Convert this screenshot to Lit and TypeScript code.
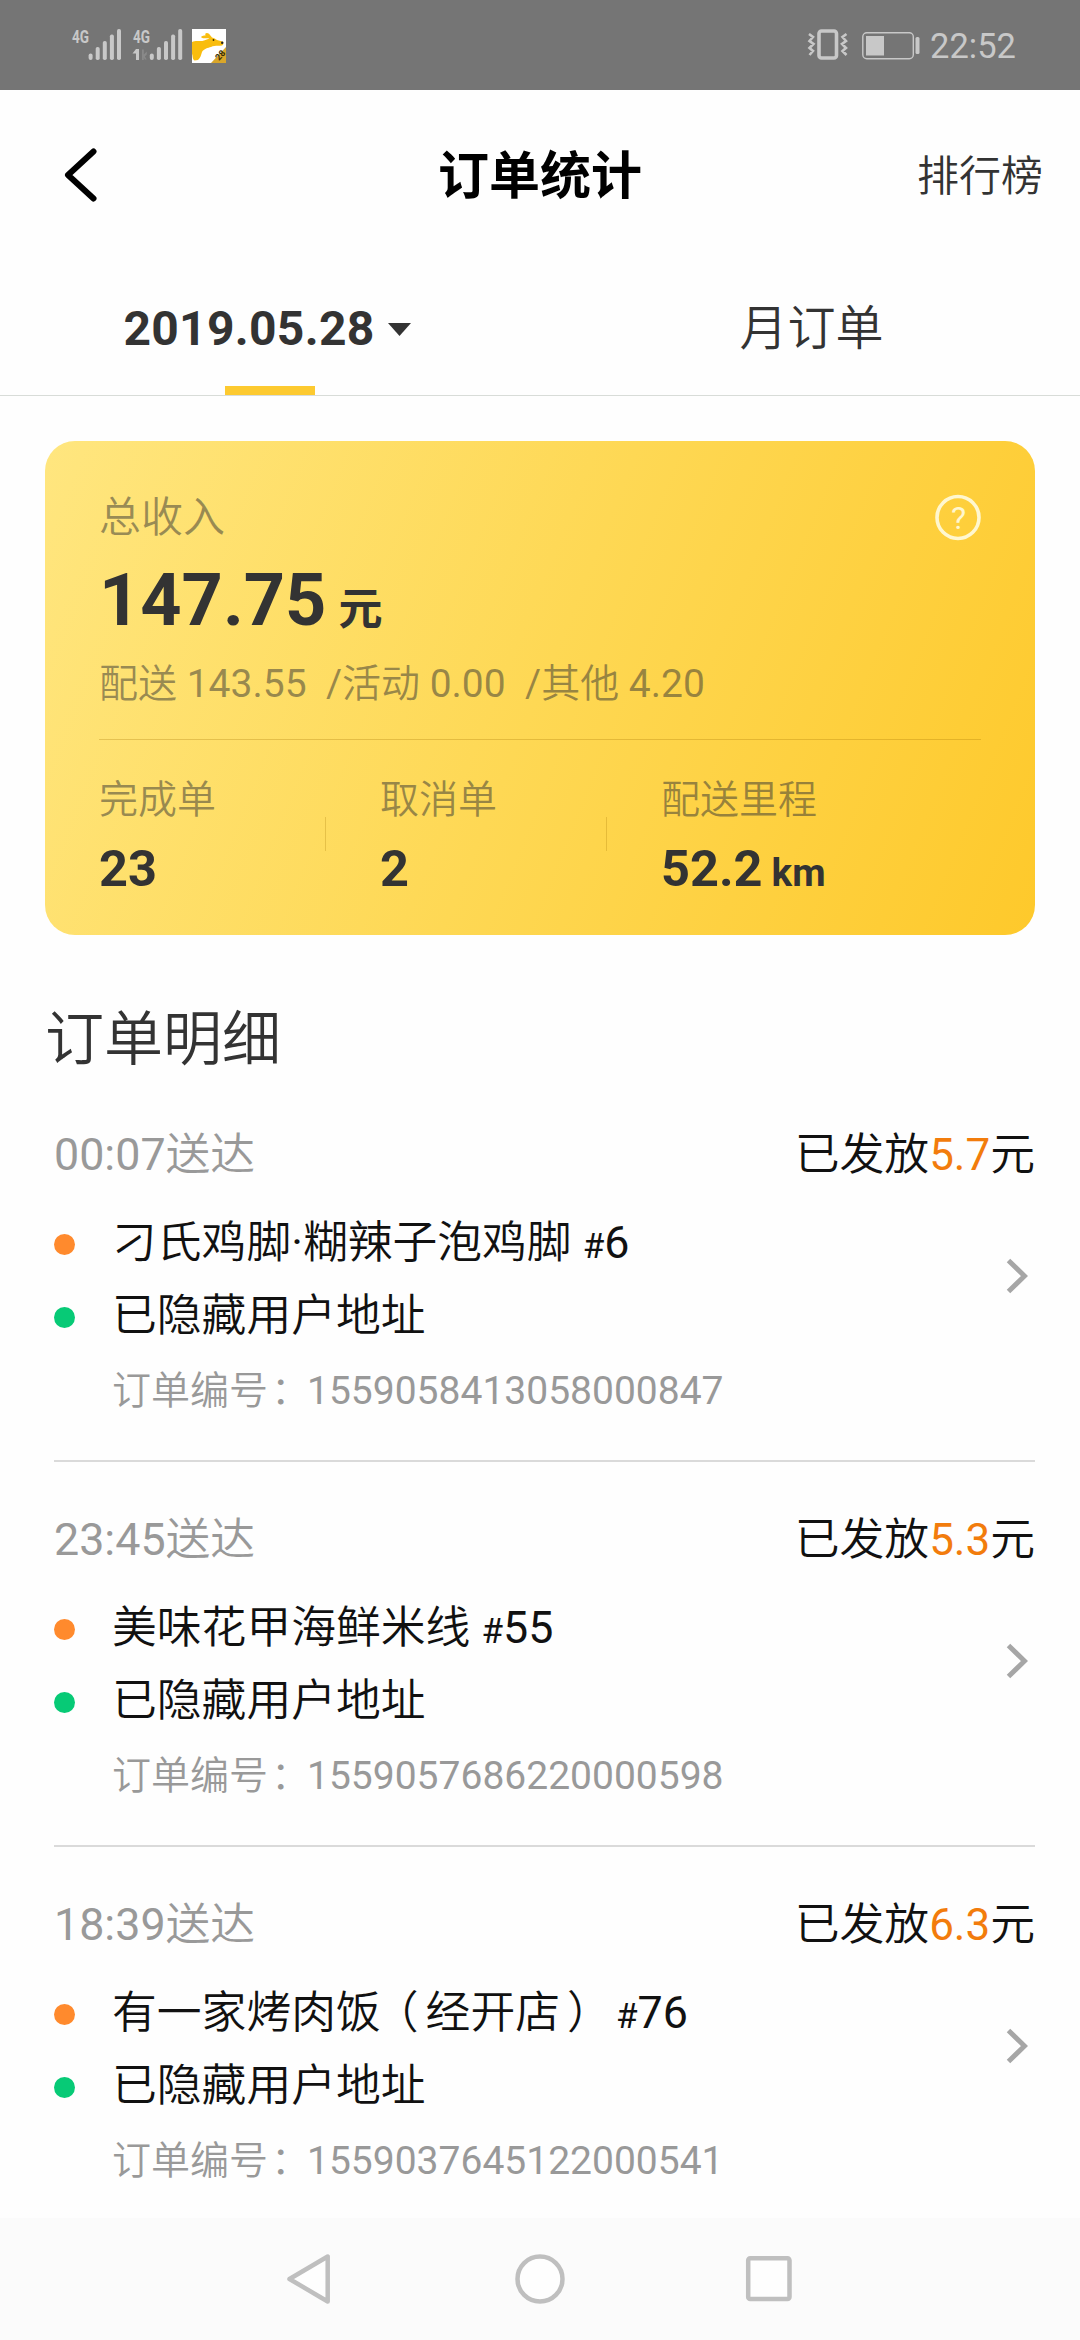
import { LitElement, html, svg, css } from "lit";
import { customElement, property } from "lit/decorators.js";

interface Order {
  time: string;
  pay: string;
  shop: string;
  seq: string;
  id: string;
}

const ORDERS: Order[] = [
  { time: "00:07", pay: "5.7", shop: "刁氏鸡脚·糊辣子泡鸡脚", seq: "6", id: "1559058413058000847" },
  { time: "23:45", pay: "5.3", shop: "美味花甲海鲜米线", seq: "55", id: "1559057686220000598" },
  { time: "18:39", pay: "6.3", shop: "有一家烤肉饭（经开店）", seq: "76", id: "1559037645122000541" },
];

const signalBars = (x: number) => svg`
  <rect x=${x} y="24.5" width="4" height="6.5" rx="2" />
  <rect x=${x + 7.1} y="18" width="4" height="13" rx="1.8" />
  <rect x=${x + 14.2} y="12" width="4" height="19" rx="1.8" />
  <rect x=${x + 21.3} y="5.5" width="4" height="25.5" rx="1.8" />
  <rect x=${x + 28.4} y="0" width="4" height="31" rx="1.8" />`;

// Full-width brackets sit closer to the middle of their em box.
const spaced = (text: string) =>
  text
    .split(/([（）])/)
    .map((part) =>
      part === "（"
        ? html`<span class="open">（</span>`
        : part === "）"
          ? html`<span class="close">）</span>`
          : part
    );

@customElement("status-bar")
class StatusBar extends LitElement {
  static styles = css`
    :host {
      display: flex;
      align-items: center;
      height: 90px;
      padding: 0 65px 0 71px;
      background: #757575;
      box-sizing: border-box;
      flex: none;
    }
    svg { display: block; flex: none; overflow: visible; }
    .signal { fill: #c8c8c8; font: 700 19px Roboto, sans-serif; }
    .app { margin-left: 9px; margin-top: 2px; }
    .badge { font: 700 9px Roboto, sans-serif; fill: #3a3008; }
    .gap { flex: 1; }
    .battery { margin-left: 14px; margin-top: 1px; }
    .clock {
      margin-left: 10px;
      margin-top: 2px;
      font: 400 34.5px/40px Roboto, sans-serif;
      color: #c8c8c8;
      width: 85px;
      white-space: nowrap;
    }
  `;
  render() {
    return html`
      <svg class="signal" width="112" height="32" viewBox="0 0 112 32">
        <text x="1" y="14" textLength="17" lengthAdjust="spacingAndGlyphs">4G</text>
        ${signalBars(17.6)}
        <text x="62" y="14" textLength="17" lengthAdjust="spacingAndGlyphs">4G</text>
        <path d="M65 20h3v11h-3v-6.500h-3.500z" />
        <path d="M71 20.500h1.800v5l3-3v3l-2 2 2 3h-2l-1-2v2.500h-1.800z" opacity=".25" />
        ${signalBars(78.8)}
      </svg>
      <svg class="app" width="34" height="34" viewBox="0 0 34 34">
        <rect width="34" height="34" fill="#fff" />
        <path d="M0 13C4 11 9 13 12 11.500l5.500-2C15 9 10 10 9 8c1-1.500 3-1.500 4.500-1.500C12.500 4 15 3.500 17 4.800l3 3.700c2 .5 3.500 1.500 5 2.500l5.500 1.500c1.500 1 1 3.500-.5 4-4 .5-8-.5-11 1.500-3 1-7 1.500-9 5-1 3-1.500 6-4 8l-3.500.5C0 29.500 1 27 0 25z" fill="#f9bd0e" />
        <circle cx="21.500" cy="11" r=".9" fill="#3a3008" />
        <circle cx="30.200" cy="13.800" r="1.200" fill="#222" />
        <path d="M34 18v16H19z" fill="#d9a62a" />
        <text class="badge" transform="translate(27 32) rotate(-47)">28</text>
      </svg>
      <span class="gap"></span>
      <svg width="40" height="32" viewBox="0 0 40 32" fill="none" stroke="#c8c8c8">
        <rect x="11" y="2" width="17.500" height="27" rx="2.500" stroke-width="3.600" />
        <path d="M1 5l4 3-3.500 4 4 3-4 4 3.500 3-3.500 4M38.500 5l-4 3 3.500 4-4 3 4 4-3.500 3 4 4" stroke-width="2.600" />
      </svg>
      <svg class="battery" width="58" height="28" viewBox="0 0 58 28">
        <rect x=".8" y=".8" width="50.500" height="26" rx="4" fill="none" stroke="#c8c8c8" stroke-width="1.400" />
        <rect x="4" y="4" width="18" height="19.500" fill="#c8c8c8" />
        <rect x="53.500" y="5" width="4" height="17" rx="1.500" fill="#c8c8c8" />
      </svg>
      <span class="clock">22:52</span>
    `;
  }
}

@customElement("summary-card")
class SummaryCard extends LitElement {
  static styles = css`
    :host {
      display: block;
      box-sizing: border-box;
      flex: none;
      height: 494px;
      margin: 45px 45px 0;
      padding: 53px 54px 0 54px;
      border-radius: 30px;
      background: linear-gradient(112deg, #ffe67f 0%, #fed854 50%, #fec92b 100%);
      color: #333;
    }
    .head { display: flex; justify-content: space-between; height: 48px; }
    .label { font-size: 42px; line-height: 48px; color: rgba(51, 51, 51, 0.5); }
    .help { display: block; overflow: visible; }
    .mark { font: 400 32px Roboto, sans-serif; fill: #fff7cf; }
    .amount { margin-top: 17px; line-height: 84px; font-size: 72px; font-weight: 700; white-space: pre; }
    .unit { font-family: "Noto Sans CJK SC", sans-serif; font-size: 44px; line-height: 0; font-weight: 700; margin-left: 12px; }
    .parts { margin-top: 18px; font-size: 39px; line-height: 46px; color: rgba(51, 51, 51, 0.5); white-space: pre; }
    .rule { height: 1px; margin-top: 32px; background: rgba(160, 110, 0, 0.28); }
    .stats { display: grid; grid-template-columns: 281px 281px 1fr; margin-top: 37px; }
    .cell { display: flex; justify-content: space-between; align-items: center; }
    .name { font-size: 39px; line-height: 46px; color: rgba(51, 51, 51, 0.5); }
    .value { margin-top: 18px; font-size: 50.5px; line-height: 56px; font-weight: 700; white-space: nowrap; }
    .small { font-size: 38.5px; line-height: 0; margin-left: 9px; }
    .tick { width: 1px; height: 34px; margin-right: 54px; margin-bottom: 6px; background: rgba(160, 110, 0, 0.25); }
  `;
  private stat(name: string, value: string, unit = "", tick = true) {
    return html`<div class="cell">
      <div>
        <div class="name">${name}</div>
        <div class="value">${value}${unit ? html`<span class="small">${unit}</span>` : ""}</div>
      </div>
      ${tick ? html`<i class="tick"></i>` : ""}
    </div>`;
  }
  render() {
    return html`
      <div class="head">
        <span class="label">总收入</span>
        <svg class="help" width="46" height="46" viewBox="0 0 46 46">
          <circle cx="23" cy="23.500" r="21" fill="none" stroke="#fff7cf" stroke-width="3.600" />
          <text class="mark" x="23.500" y="35" text-anchor="middle">?</text>
        </svg>
      </div>
      <div class="amount">147.75<span class="unit">元</span></div>
      <div class="parts">配送 143.55  /活动 0.00  /其他 4.20</div>
      <div class="rule"></div>
      <div class="stats">
        ${this.stat("完成单", "23")} ${this.stat("取消单", "2")} ${this.stat("配送里程", "52.2", "km", false)}
      </div>
    `;
  }
}

@customElement("order-row")
class OrderRow extends LitElement {
  @property({ attribute: false }) order!: Order;
  static styles = css`
    :host {
      display: block;
      box-sizing: border-box;
      flex: none;
      height: 385px;
      padding-top: 51px;
      margin: 0 45px 0 54px;
      border-bottom: 2px solid #dadada;
      color: #111;
      font-size: 44.8px;
      line-height: 54px;
      white-space: nowrap;
    }
    .top { display: flex; justify-content: space-between; }
    .time { color: #999; }
    .pay { color: #f27c0c; font-size: 44px; line-height: 0; }
    .body { display: flex; align-items: flex-start; margin-top: 34px; }
    .lines { flex: 1; }
    .line { display: flex; align-items: center; height: 54px; margin-bottom: 19px; }
    .dot { width: 21px; height: 21px; border-radius: 50%; margin: 3px 37px 0 0; background: #ff8a2d; }
    .dot.green { background: #07ca76; }
    .hash { font-size: 35px; line-height: 0; }
    .open, .close { font-feature-settings: "halt"; }
    .open { margin: 0 7px 0 15.4px; }
    .close { margin: 0 15.4px 0 7px; }
    .id { margin: 25px 0 0 58px; font-size: 39px; line-height: 46px; color: #999; }
    .colon { margin: 0 -3px 0 3px; }
    .arrow { display: block; margin: 42px 7px 0 0; }
  `;
  render() {
    const o = this.order;
    return html`
      <div class="top">
        <span class="time">${o.time}送达</span>
        <span>已发放<span class="pay">${o.pay}</span>元</span>
      </div>
      <div class="body">
        <div class="lines">
          <div class="line"><i class="dot"></i><span>${spaced(o.shop)} <span class="hash">#</span>${o.seq}</span></div>
          <div class="line"><i class="dot green"></i><span>已隐藏用户地址</span></div>
          <div class="id">订单编号<span class="colon">：</span>${o.id}</div>
        </div>
        <svg class="arrow" width="22" height="36" viewBox="0 0 22 36">
          <path d="M2.500 2.500L18.500 18 2.500 33.500" fill="none" stroke="#a6a6a6" stroke-width="5" />
        </svg>
      </div>
    `;
  }
}

@customElement("app-root")
class AppRoot extends LitElement {
  static styles = css`
    :host {
      display: flex;
      flex-direction: column;
      width: 1080px;
      height: 2340px;
      overflow: hidden;
      background: #fefefe;
      font-family: Roboto, "Noto Sans CJK SC DemiLight", "Noto Sans CJK SC Light", "Noto Sans CJK SC", sans-serif;
      color: #333;
    }
    .bar {
      flex: none;
      display: grid;
      grid-template-columns: 1fr auto 1fr;
      align-items: center;
      height: 174px;
      padding: 0 37px 0 64px;
    }
    .title {
      margin-right: 27px;
      font-family: Roboto, "Noto Sans CJK SC", sans-serif;
      font-size: 51px;
      line-height: 60px;
      font-weight: 700;
      color: #000;
    }
    .rank { justify-self: end; font-size: 42px; line-height: 50px; }
    .back { display: block; margin-top: -5px; }
    .tabs { flex: none; display: grid; grid-template-columns: 1fr 1fr; height: 132px; box-sizing: border-box; border-bottom: 1px solid #d8dcd8; }
    .tab { display: grid; grid-template-rows: 1fr 9px; justify-items: center; font-size: 48px; }
    .text { display: flex; align-items: center; padding: 8px 0 0 3px; line-height: 56px; }
    .active .text { padding: 8px 6px 0 0; font-weight: 700; letter-spacing: 0.3px; }
    .caret { display: block; margin-left: 13px; margin-top: 1px; }
    .mark { width: 90px; height: 9px; background: #fdca30; }
    .heading { flex: none; margin: 70px 0 2px 45px; font-size: 59px; line-height: 70px; }
    .list { flex: 1; min-height: 0; overflow: hidden; display: flex; flex-direction: column; }
    .nav {
      flex: none;
      display: flex;
      align-items: center;
      justify-content: center;
      gap: 177px;
      height: 122px;
      background: #fbfbfb;
    }
    .nav svg { display: block; }
  `;
  render() {
    return html`
      <status-bar></status-bar>
      <div class="bar">
        <svg class="back" width="34" height="54" viewBox="0 0 34 54">
          <path d="M29.500 3.500L4 27l25.500 23.500" fill="none" stroke="#000" stroke-width="6" stroke-linecap="round" stroke-linejoin="round" />
        </svg>
        <div class="title">订单统计</div>
        <div class="rank">排行榜</div>
      </div>
      <div class="tabs">
        <div class="tab active">
          <div class="text">
            2019.05.28
            <svg class="caret" width="23" height="13" viewBox="0 0 23 13"><path d="M0 0h23L11.500 13z" fill="#333" /></svg>
          </div>
          <i class="mark"></i>
        </div>
        <div class="tab"><div class="text">月订单</div></div>
      </div>
      <summary-card></summary-card>
      <div class="heading">订单明细</div>
      <div class="list">${ORDERS.map((o) => html`<order-row .order=${o}></order-row>`)}</div>
      <div class="nav">
        <svg width="52" height="52" viewBox="0 0 52 52">
          <path d="M42.700 3.500v45L4.500 26z" fill="#fefefe" stroke="#bfbfbf" stroke-width="4.500" stroke-linejoin="round" />
        </svg>
        <svg width="52" height="52" viewBox="0 0 52 52">
          <circle cx="26" cy="26" r="22.500" fill="#fefefe" stroke="#bfbfbf" stroke-width="4.500" />
        </svg>
        <svg width="52" height="52" viewBox="0 0 52 52">
          <rect x="5.200" y="5.200" width="41.300" height="40.800" rx="2" fill="#fefefe" stroke="#bfbfbf" stroke-width="4.500" />
        </svg>
      </div>
    `;
  }
}
